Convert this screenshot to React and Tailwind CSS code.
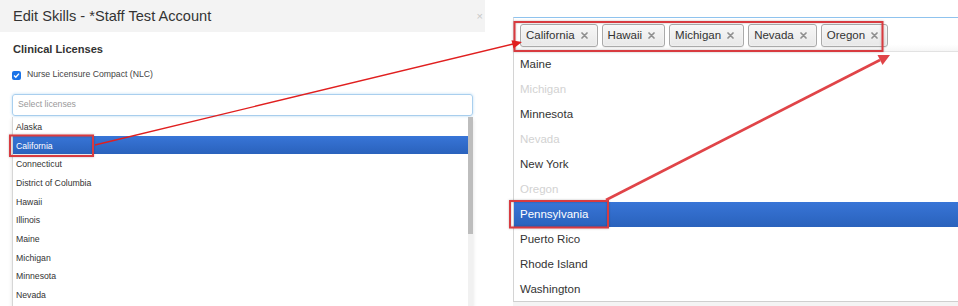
const leftStates = [
	'Alaska',
	'California',
	'Connecticut',
	'District of Columbia',
	'Hawaii',
	'Illinois',
	'Maine',
	'Michigan',
	'Minnesota',
	'Nevada',
];

const rightStates = [
	{ name: 'Maine' },
	{ name: 'Michigan', disabled: true },
	{ name: 'Minnesota' },
	{ name: 'Nevada', disabled: true },
	{ name: 'New York' },
	{ name: 'Oregon', disabled: true },
	{ name: 'Pennsylvania', active: true },
	{ name: 'Puerto Rico' },
	{ name: 'Rhode Island' },
	{ name: 'Washington' },
];

const tags = ['California', 'Hawaii', 'Michigan', 'Nevada', 'Oregon'];

function TagClose() {
	return (
		<svg width="7" height="7" viewBox="0 0 7 7" className="shrink-0">
			<path d="M1 1 L6 6 M6 1 L1 6" stroke="#8f8f8f" strokeWidth="1.7" strokeLinecap="round" />
		</svg>
	);
}

function LeftPanel() {
	return (
		<div className="w-[485px] h-full flex flex-col bg-white">
			{/* Modal header */}
			<div className="h-[32px] shrink-0 bg-[#f3f3f3] flex items-center justify-between pl-[13px] pr-[2px]">
				<span className="text-[14.6px] text-[#333] leading-none">Edit Skills - *Staff Test Account</span>
				<span className="text-[11px] text-[#c8c8c8] leading-none">×</span>
			</div>

			<div className="flex-1 flex flex-col px-[12px] min-h-0">
				<div className="mt-[10px] h-[14px] text-[11.1px] font-bold text-[#333] leading-[14px] pl-[1px]">
					Clinical Licenses
				</div>

				<div className="mt-[13px] h-[12px] flex items-center gap-[6px]">
					<div className="w-[9px] h-[9px] rounded-[2px] bg-[#1a73e8] flex items-center justify-center">
						<svg width="7" height="7" viewBox="0 0 7 7">
							<path d="M1 3.6 L2.8 5.3 L6 1.6" stroke="white" strokeWidth="1.4" fill="none" />
						</svg>
					</div>
					<span className="text-[8.7px] text-[#444]">Nurse Licensure Compact (NLC)</span>
				</div>

				{/* Search box */}
				<div className="mt-[13px] h-[22px] shrink-0 border border-[#a9cfee] rounded-[3px] shadow-[0_0_3px_rgba(102,175,233,0.45)] flex items-center pl-[5px] w-[461px]">
					<span className="text-[8.7px] text-[#999]">Select licenses</span>
				</div>

				{/* Results list */}
				<div className="mt-[1px] flex-1 min-h-0 w-[461px] flex border-l border-[#d6d6d6] shadow-[0_2px_4px_rgba(0,0,0,0.12)] overflow-hidden">
					<div className="flex-1 flex flex-col">
						{leftStates.map((s) => (
							<div
								key={s}
								className={
									s === 'California'
										? 'h-[18.7px] shrink-0 flex items-center pl-[3px] pt-[2px] text-[8.7px] text-white bg-gradient-to-b from-[#3875d7] to-[#2a62bc]'
										: 'h-[18.7px] shrink-0 flex items-center pl-[3px] pt-[2px] text-[8.7px] text-[#333]'
								}
							>
								{s}
							</div>
						))}
					</div>
					<div className="w-[5px] h-full bg-[#f1f1f1] flex flex-col">
						<div className="h-[117px] bg-[#bdbdbd]" />
					</div>
				</div>
			</div>
		</div>
	);
}

function RightPanel() {
	return (
		<div className="flex-1 h-full flex flex-col bg-white pt-[17px]">
			{/* Multi-select choices */}
			<div className="h-[35px] shrink-0 border-t border-[#8fc3ee] border-l border-l-[#dcdcdc] border-b border-b-[#e2e2e2] flex items-start pt-[6px] pl-[6px] gap-[4px] bg-gradient-to-b from-white from-80% to-[#f6f6f6]">
				{tags.map((t) => (
					<div
						key={t}
						className="h-[23px] flex items-center gap-[6px] pl-[5px] pr-[9px] border border-[#aaa] rounded-[3px] bg-gradient-to-b from-[#f7f7f7] to-[#e8e8e8] shadow-[inset_0_0_2px_white,0_1px_0_rgba(0,0,0,0.05)]"
					>
						<span className="text-[11.5px] text-[#333] leading-none">{t}</span>
						<TagClose />
					</div>
				))}
			</div>

			{/* Results */}
			<div className="h-[250px] shrink-0 flex flex-col border-l border-[#d4d4d4] border-b border-b-[#cfcfcf]">
				{rightStates.map((s) => (
					<div
						key={s.name}
						className={
							s.active
								? 'h-[25px] shrink-0 flex items-center pl-[6px] pt-[1px] text-[11.5px] text-white bg-gradient-to-b from-[#3875d7] to-[#2a62bc]'
								: s.disabled
									? 'h-[25px] shrink-0 flex items-center pl-[6px] pt-[1px] text-[11.5px] text-[#d2d2d2]'
									: 'h-[25px] shrink-0 flex items-center pl-[6px] pt-[1px] text-[11.5px] text-[#333]'
						}
					>
						{s.name}
					</div>
				))}
			</div>
			<div className="flex-1 bg-[#f4f4f4]" />
		</div>
	);
}

function Annotations() {
	return (
		<svg
			className="absolute inset-0 pointer-events-none"
			width="958"
			height="306"
			viewBox="0 0 958 306"
		>
			<defs>
				<filter id="glow" x="-10%" y="-20%" width="120%" height="140%">
					<feDropShadow dx="0" dy="0" stdDeviation="1.2" floodColor="#000" floodOpacity="0.25" />
				</filter>
			</defs>

			{/* Red highlight boxes */}
			<rect x="10" y="135.5" width="83" height="20.5" fill="none" stroke="#d83a3f" strokeWidth="2" filter="url(#glow)" />
			<rect x="514.5" y="22" width="368" height="29" fill="none" stroke="#d83a3f" strokeWidth="2" filter="url(#glow)" />
			<rect x="510" y="201" width="98" height="26.5" fill="none" stroke="#d83a3f" strokeWidth="2" filter="url(#glow)" />

			{/* Arrow: California -> tags */}
			<line x1="95" y1="145" x2="513" y2="44" stroke="#e01f1f" strokeWidth="1.4" />
			<polygon points="522,42 511.5,40.3 513.5,48.5" fill="#e01f1f" />

			{/* Arrow: Pennsylvania -> tags */}
			<line x1="606" y1="200" x2="880" y2="60" stroke="#e04448" strokeWidth="2.6" />
			<polygon points="890,55 877.5,55 882.5,65" fill="#e04448" />
		</svg>
	);
}

export default function App() {
	return (
		<div className="relative w-[958px] h-[306px] flex bg-white overflow-hidden font-['Liberation_Sans',Arial,sans-serif]">
			<LeftPanel />
			<div className="w-[28px] shrink-0" />
			<RightPanel />
			<Annotations />
		</div>
	);
}
